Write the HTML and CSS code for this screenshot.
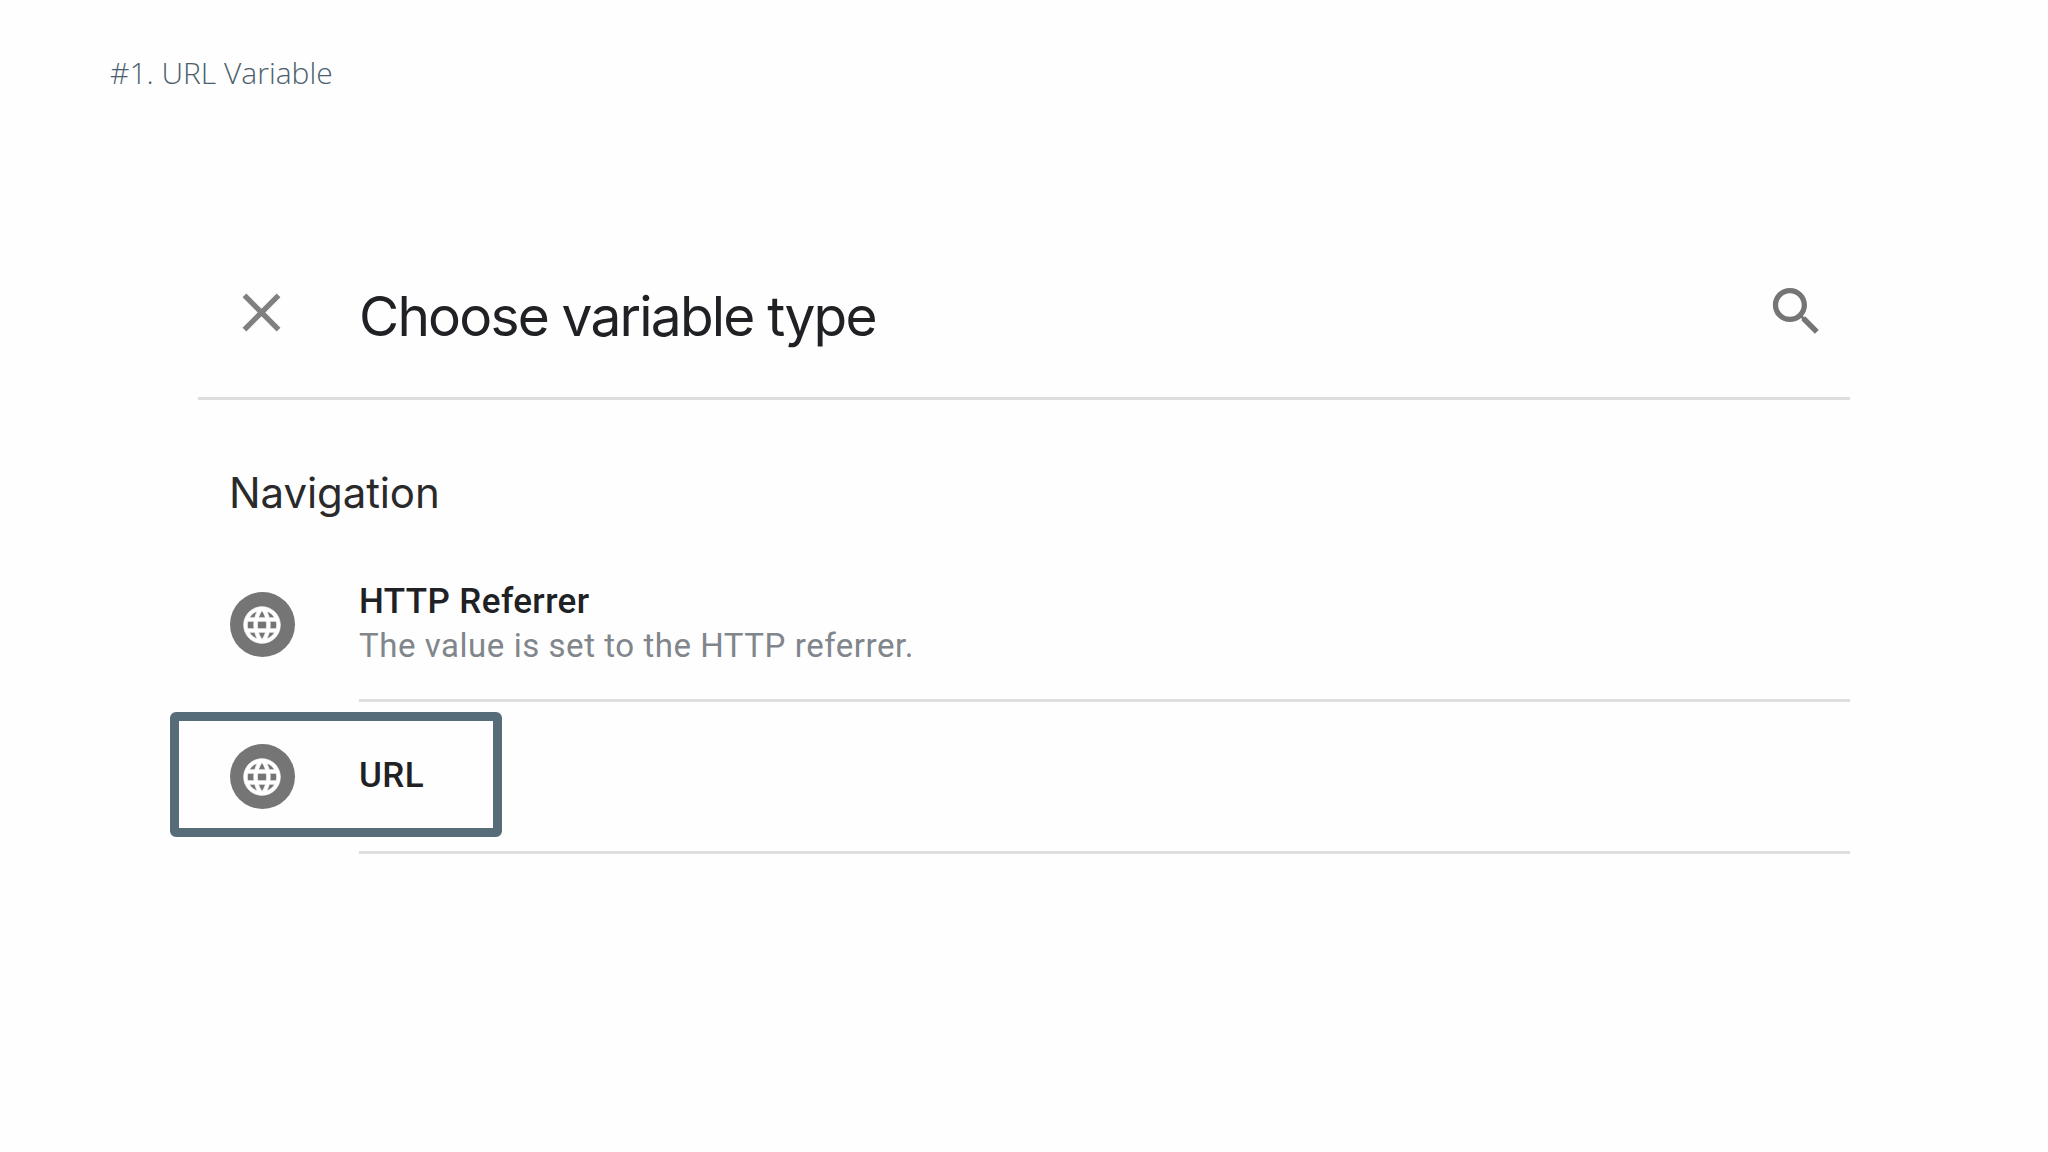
FILE: index.html
```html
<!DOCTYPE html>
<html lang="en">
<head>
<meta charset="utf-8">
<title>#1. URL Variable</title>
<link rel="stylesheet" href="styles.css">
</head>
<body>
<h1 class="slide-title">#1. URL Variable</h1>
<main class="panel">
  <header class="panel-head">
    <svg class="icon-close" viewBox="0 0 24 24"><path d="M19 6.41L17.59 5 12 10.59 6.41 5 5 6.41 10.59 12 5 17.59 6.41 19 12 13.41 17.59 19 19 17.59 13.41 12z"/></svg>
    <h2 class="panel-title">Choose variable type</h2>
    <svg class="icon-search" viewBox="0 0 24 24"><path d="M15.5 14h-.79l-.28-.27C15.41 12.59 16 11.11 16 9.5 16 5.91 13.09 3 9.5 3S3 5.91 3 9.5 5.91 16 9.5 16c1.61 0 3.09-.59 4.23-1.57l.27.28v.79l5 4.99L20.49 19l-4.99-5zm-6 0C7.01 14 5 11.99 5 9.5S7.01 5 9.5 5 14 7.01 14 9.5 11.99 14 9.5 14z"/></svg>
  </header>
  <h3 class="section-title">Navigation</h3>
  <div class="row">
    <span class="globe"><svg viewBox="0 0 24 24"><path d="M11.99 2C6.47 2 2 6.48 2 12s4.47 10 9.99 10C17.52 22 22 17.52 22 12S17.52 2 11.99 2zm6.93 6h-2.95c-.32-1.25-.78-2.45-1.38-3.56 1.84.63 3.37 1.91 4.33 3.56zM12 4.04c.83 1.2 1.48 2.53 1.91 3.96h-3.82c.43-1.43 1.08-2.76 1.91-3.96zM4.26 14C4.1 13.36 4 12.69 4 12s.1-1.36.26-2h3.38c-.08.66-.14 1.32-.14 2 0 .68.06 1.34.14 2H4.26zm.82 2h2.95c.32 1.25.78 2.45 1.38 3.56-1.84-.63-3.37-1.9-4.33-3.56zm2.95-8H5.08c.96-1.66 2.49-2.93 4.33-3.56C8.81 5.55 8.35 6.75 8.03 8zM12 19.96c-.83-1.2-1.48-2.53-1.91-3.96h3.82c-.43 1.43-1.08 2.76-1.91 3.96zM14.34 14H9.66c-.09-.66-.16-1.32-.16-2 0-.68.07-1.35.16-2h4.68c.09.65.16 1.32.16 2 0 .68-.07 1.34-.16 2zm.25 5.56c.6-1.11 1.06-2.31 1.38-3.56h2.95c-.96 1.65-2.49 2.93-4.33 3.56zM16.36 14c.08-.66.14-1.32.14-2 0-.68-.06-1.34-.14-2h3.38c.16.64.26 1.31.26 2s-.1 1.36-.26 2h-3.38z"/></svg></span>
    <div class="row-body">
      <div class="row-name">HTTP Referrer</div>
      <div class="row-desc">The value is set to the HTTP referrer.</div>
    </div>
  </div>
  <div class="row">
    <span class="globe"><svg viewBox="0 0 24 24"><path d="M11.99 2C6.47 2 2 6.48 2 12s4.47 10 9.99 10C17.52 22 22 17.52 22 12S17.52 2 11.99 2zm6.93 6h-2.95c-.32-1.25-.78-2.45-1.38-3.56 1.84.63 3.37 1.91 4.33 3.56zM12 4.04c.83 1.2 1.48 2.53 1.91 3.96h-3.82c.43-1.43 1.08-2.76 1.91-3.96zM4.26 14C4.1 13.36 4 12.69 4 12s.1-1.36.26-2h3.38c-.08.66-.14 1.32-.14 2 0 .68.06 1.34.14 2H4.26zm.82 2h2.95c.32 1.25.78 2.45 1.38 3.56-1.84-.63-3.37-1.9-4.33-3.56zm2.95-8H5.08c.96-1.66 2.49-2.93 4.33-3.56C8.81 5.55 8.35 6.75 8.03 8zM12 19.96c-.83-1.2-1.48-2.53-1.91-3.96h3.82c-.43 1.43-1.08 2.76-1.91 3.96zM14.34 14H9.66c-.09-.66-.16-1.32-.16-2 0-.68.07-1.35.16-2h4.68c.09.65.16 1.32.16 2 0 .68-.07 1.34-.16 2zm.25 5.56c.6-1.11 1.06-2.31 1.38-3.56h2.95c-.96 1.65-2.49 2.93-4.33 3.56zM16.36 14c.08-.66.14-1.32.14-2 0-.68-.06-1.34-.14-2h3.38c.16.64.26 1.31.26 2s-.1 1.36-.26 2h-3.38z"/></svg></span>
    <div class="row-body">
      <div class="row-name">URL</div>
    </div>
    <div class="highlight"></div>
  </div>
</main>
</body>
</html>
```
FILE: styles.css
```css
* { box-sizing: border-box; }
html, body { margin: 0; height: 100%; }
body {
  background: #fefefe;
  padding: 50px 198px 0 110px;
  overflow: hidden;
}
.slide-title {
  margin: 0 0 176px;
  height: 46px;
  font: 300 30px/46px "Open Sans", sans-serif;
  color: #4a616d;
}
.panel {
  margin-left: 88px;
  width: 1652px;
}
.panel-head {
  display: flex;
  align-items: center;
  height: 128px;
  border-bottom: 3px solid #dedede;
  padding: 0 22px 44px 31px;
}
.icon-close { width: 65px; height: 65px; fill: #808080; flex: none; }
.panel-title {
  margin: 6px 0 0 65px;
  flex: 1;
  font: 400 55px/60px "Inter", sans-serif;
  letter-spacing: -1.8px;
  color: #202124;
}
.icon-search { width: 63px; height: 63px; fill: #757575; flex: none; margin-top: -3px; }
.section-title {
  margin: 0;
  padding: 65px 0 0 31px;
  height: 150px;
  font: 400 42px/56px "Inter", sans-serif;
  letter-spacing: -0.1px;
  color: #2a2a2a;
}
.row {
  position: relative;
  display: flex;
  align-items: center;
  height: 152px;
  padding-left: 31.5px;
}
.globe {
  width: 65px;
  height: 65px;
  border-radius: 50%;
  background: #757575;
  display: flex;
  align-items: center;
  justify-content: center;
  flex: none;
  margin-bottom: 3px;
}
.globe svg { width: 44px; height: 44px; fill: #fff; stroke: #fff; stroke-width: 0.35; }
.row-body {
  align-self: stretch;
  flex: 1;
  margin-left: 64.5px;
  padding-bottom: 1px;
  border-bottom: 3px solid #dedede;
  display: flex;
  flex-direction: column;
  justify-content: center;
}
.row-name {
  font: 500 35px/44px "Roboto", sans-serif;
  letter-spacing: 0.4px;
  color: #202124;
}
.row-desc {
  font: 400 33px/44px "Roboto", sans-serif;
  letter-spacing: 0.55px;
  color: #80868b;
}
.highlight {
  position: absolute;
  left: -28px;
  top: 10px;
  width: 332px;
  height: 125px;
  border: 9.5px solid #566d79;
  border-radius: 6px;
}
```
